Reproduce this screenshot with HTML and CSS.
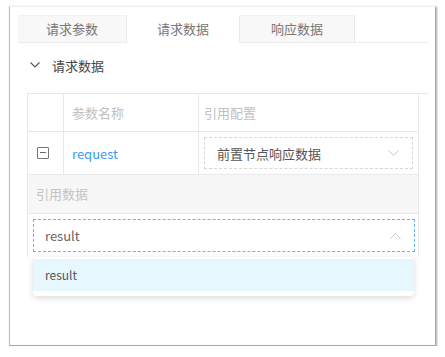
FILE: index.html
```html
<!DOCTYPE html>
<html lang="zh-CN">

<head>
    <meta charset="UTF-8">
    <meta name="viewport" content="width=device-width, initial-scale=1.0">
    <title>请求数据</title>
    <link rel="stylesheet" href="styles.css">
</head>

<body>
    <div class="frame">
        <!-- 标签页 -->
        <div class="tabs">
            <div class="tab">请求参数</div>
            <div class="tab active">请求数据</div>
            <div class="tab">响应数据</div>
        </div>

        <!-- 折叠标题 -->
        <div class="section-title">
            <svg class="arrow" width="10" height="6" viewBox="0 0 10 6">
                <path d="M0.5 0.5 L5 5 L9.5 0.5" fill="none" stroke="#555" stroke-width="1.1" />
            </svg>
            <span>请求数据</span>
        </div>

        <!-- 参数表 -->
        <div class="grid">
            <div class="cell"></div>
            <div class="cell head">参数名称</div>
            <div class="cell head last">引用配置</div>

            <div class="cell icon-col">
                <span class="minus"></span>
            </div>
            <div class="cell name">request</div>
            <div class="cell last">
                <div class="select">
                    <span>前置节点响应数据</span>
                    <svg width="11" height="6" viewBox="0 0 11 6">
                        <path d="M0.5 0.5 L5.5 5.5 L10.5 0.5" fill="none" stroke="#c8c8c8" stroke-width="1" />
                    </svg>
                </div>
            </div>

            <div class="detail">
                <div class="detail-label">引用数据</div>
                <div class="detail-body">
                    <div class="input">
                        <span>result</span>
                        <svg width="11" height="6" viewBox="0 0 11 6">
                            <path d="M0.5 5.5 L5.5 0.5 L10.5 5.5" fill="none" stroke="#c8c8c8" stroke-width="1" />
                        </svg>
                    </div>
                    <!-- 下拉选项 -->
                    <div class="dropdown">
                        <div class="option">result</div>
                    </div>
                </div>
            </div>
        </div>
    </div>
</body>

</html>
```

FILE: styles.css
```css
body {
    margin: 0;
    padding: 0;
    background: #fff;
    font-family: "Noto Sans CJK SC", "Liberation Sans", sans-serif;
    font-size: 13px;
    color: #444;
}

.frame {
    box-sizing: border-box;
    width: 427px;
    height: 340px;
    margin: 6px 0 0 9px;
    padding: 8px 7px 0 8px;
    border: 1px solid #bbb;
    border-top-color: #eee;
    border-right-color: #a8a8a8;
    border-bottom-color: #a8a8a8;
    box-shadow: 1px 1px 2px #aaa;
}

/* 标签页 */
.tabs {
    display: flex;
    height: 27px;
    border-bottom: 1px solid #ececec;
}

.tab {
    box-sizing: border-box;
    width: 108px;
    line-height: 26px;
    text-align: center;
    color: #777;
    background: #f8f8f8;
    border-top: 1px solid #f2f2f2;
}

.tab.active {
    width: 114px;
    background: #fff;
    border-left: 1px solid #eaeaea;
    border-right: 1px solid #eaeaea;
    border-top: 1px solid #fff;
    margin-bottom: -1px;
    height: 28px;
}

.tab:last-child {
    width: 115px;
    border-right: 1px solid #eaeaea;
}

/* 折叠标题 */
.section-title {
    display: flex;
    align-items: center;
    height: 20px;
    margin: 12px 0 0 12px;
}

.section-title .arrow {
    margin-right: 12px;
}

/* 参数表 */
.grid {
    display: grid;
    grid-template-columns: 36px 135px 220px;
    margin: 18px 0 0 9px;
    border-top: 1px solid #e8e8e8;
    border-left: 1px solid #e8e8e8;
    position: relative;
}

.cell {
    border-right: 1px solid #e8e8e8;
    border-bottom: 1px solid #e8e8e8;
    display: flex;
    align-items: center;
    padding-left: 8px;
    height: 37px;
}

.cell:nth-child(n+4) {
    height: 42px;
}

.cell.head {
    color: #c0c0c0;
}

.icon-col {
    padding-left: 9px;
}

.minus {
    box-sizing: border-box;
    width: 12px;
    height: 12px;
    border: 1px solid #777;
    border-radius: 1px;
    position: relative;
}

.minus::after {
    content: "";
    position: absolute;
    left: 2px;
    right: 2px;
    top: 4px;
    height: 1px;
    background: #666;
}

.name {
    color: #3c9cf2;
}

.cell.last {
    padding-left: 5px;
}

.select {
    box-sizing: border-box;
    width: 209px;
    height: 32px;
    border: 1px dashed #d6d6d6;
    display: flex;
    align-items: center;
    justify-content: space-between;
    padding: 0 13px 0 12px;
    color: #555;
}

/* 引用数据行 */
.detail {
    grid-column: 1 / 4;
    border-right: 1px solid #e8e8e8;
}

.detail-label {
    height: 38px;
    line-height: 38px;
    padding-left: 8px;
    background: #f7f7f7;
    color: #c4c4c4;
    border-bottom: 1px solid #e8e8e8;
}

.detail-body {
    position: relative;
    height: 43px;
    padding: 5px 3px 0 5px;
    box-sizing: border-box;
}

.input {
    box-sizing: border-box;
    height: 33px;
    border: 1px dashed #62b4fb;
    display: flex;
    align-items: center;
    justify-content: space-between;
    padding: 0 13px 0 11px;
    color: #666;
    background: #fff;
}

.dropdown {
    position: absolute;
    left: 5px;
    right: 4px;
    top: 43px;
    padding: 2px 0 5px;
    background: #fff;
    border-radius: 4px;
    box-shadow: 0 2px 6px rgba(0, 0, 0, 0.15);
}

.option {
    height: 32px;
    line-height: 32px;
    padding-left: 12px;
    font-size: 12px;
    color: #555;
    background: #e6f7fe;
}
```
